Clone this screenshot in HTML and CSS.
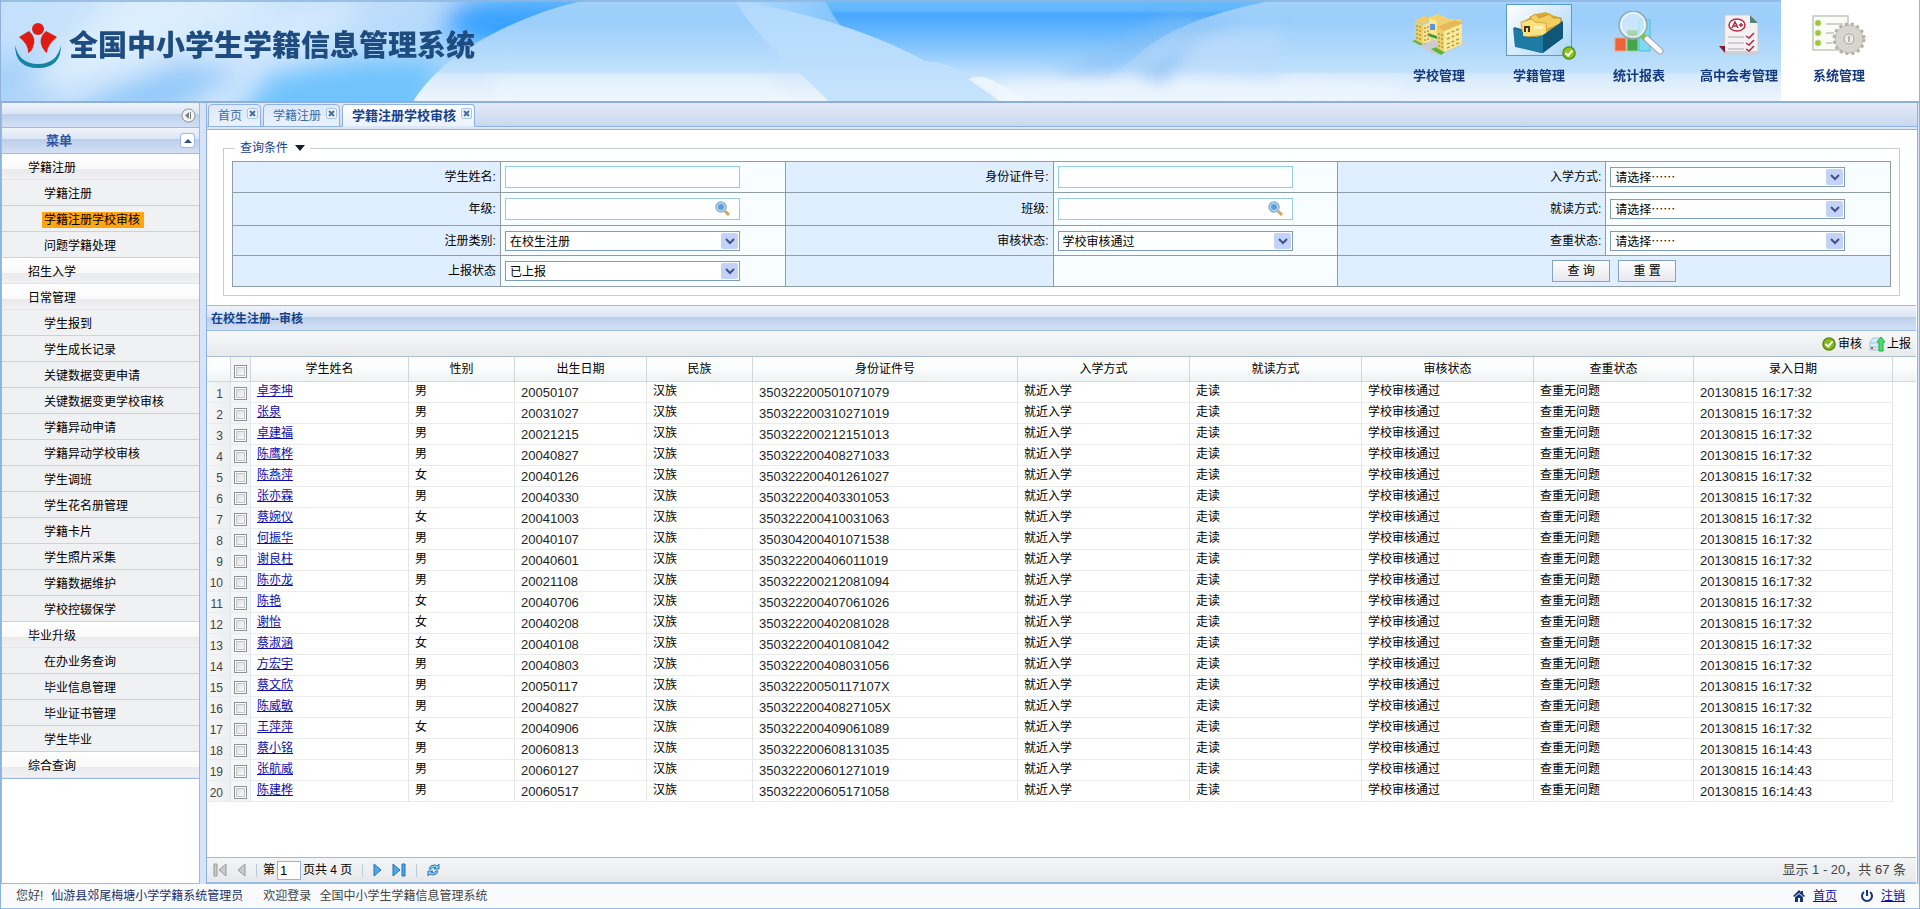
FILE: index.html
```html
<!DOCTYPE html>
<html lang="zh-CN">
<head>
    <meta charset="utf-8">
    <title>全国中小学生学籍信息管理系统</title>
    <link rel="stylesheet" href="styles.css">
</head>
<body>
    <header class="banner">
        <svg class="banner-bg" viewBox="0 0 1920 101" preserveAspectRatio="none" aria-hidden="true">
            <defs>
                <linearGradient id="sky" x1="0" y1="0" x2="0" y2="1">
                    <stop offset="0" stop-color="#a2d2fc"/><stop offset=".2" stop-color="#9bcefb"/>
                    <stop offset=".71" stop-color="#c0e1fc"/><stop offset=".74" stop-color="#d6eafb"/><stop offset="1" stop-color="#eef5fc"/>
                </linearGradient>
                <linearGradient id="left" x1="0" y1="0" x2="1" y2="0">
                    <stop offset="0" stop-color="#c4e0fb"/><stop offset=".35" stop-color="#cfe6fc"/>
                    <stop offset=".7" stop-color="#b4dafc"/><stop offset="1" stop-color="#6dbcfd"/>
                </linearGradient>
                <linearGradient id="deep" gradientUnits="userSpaceOnUse" x1="0" y1="0" x2="0" y2="101">
                    <stop offset="0" stop-color="#6cbcfb"/><stop offset=".1" stop-color="#62b6fb"/><stop offset=".14" stop-color="#48a7fe"/>
                    <stop offset=".35" stop-color="#6bbafd"/><stop offset=".6" stop-color="#a2d2fc"/><stop offset=".8" stop-color="#d3e8fc"/><stop offset="1" stop-color="#eaf4fd"/>
                </linearGradient>
                <linearGradient id="ray" gradientUnits="userSpaceOnUse" x1="0" y1="0" x2="0" y2="101">
                    <stop offset="0" stop-color="#b2d9fc"/><stop offset=".5" stop-color="#b9ddfc"/><stop offset="1" stop-color="#c8e4fc"/>
                </linearGradient>
                <linearGradient id="wedge" x1="0" y1="0" x2="1" y2="0">
                    <stop offset="0" stop-color="#b2d9fc"/><stop offset="1" stop-color="#7dc2fc"/>
                </linearGradient>
                <linearGradient id="veil" x1="0" y1="0" x2="1" y2="0">
                    <stop offset="0" stop-color="#a5d2fb" stop-opacity="0"/><stop offset=".45" stop-color="#a5d2fb" stop-opacity=".8"/><stop offset="1" stop-color="#a5d2fb"/>
                </linearGradient>
                <filter id="soft" x="-50%" y="-50%" width="200%" height="200%"><feGaussianBlur stdDeviation="12"/></filter>
                <filter id="softer" x="-50%" y="-50%" width="200%" height="200%"><feGaussianBlur stdDeviation="7"/></filter>
            </defs>
            <rect width="1920" height="101" fill="url(#sky)"/>
            <path d="M0 0H600L420 101H0z" fill="url(#left)"/>
            <g filter="url(#soft)">
                <path d="M230 130L270 75L360 60L440 60L420 130z" fill="#6fc3fd"/>
                <path d="M60 120L110 90L190 60L240 70L160 120z" fill="#7dbff9" opacity=".7"/>
                <path d="M-20 60L60 50L50 110L-20 110z" fill="#a8d2fa"/>
                <path d="M120 -10H280L120 70L20 90z" fill="#dceefd"/>
                <path d="M200 20L400 -10L300 50L190 65z" fill="#d3e9fd"/>
                <path d="M460 2H600L500 50L440 30z" fill="#36a0fe"/>
                <path d="M330 -5H480L430 10L380 14z" fill="#bfdcf8"/>
            </g>
            <path d="M413 101C432 68 490 22 585 0H1280V101z" fill="url(#sky)"/>
            <path d="M820 0H1275C1215 12 1180 25 1150 45L1080 101H900z" fill="url(#deep)"/>
            <path d="M735 0H825Q838 28 856 40L800 24z" fill="url(#wedge)"/>
            <path d="M735 0C760 45 800 70 828 101H1005Q960 62 925 61Q850 20 735 0z" fill="url(#ray)"/>
            <g filter="url(#softer)">
                <path d="M490 78H770L796 110H500z" fill="#edf6fe" opacity=".6"/>
                <path d="M1050 75L1170 15L1240 20L1110 80z" fill="#86c0f6" opacity=".5"/>
                <path d="M1080 101L1170 40L1280 30V101z" fill="#bcdcfb" opacity=".7"/>
                <path d="M1000 85L1150 76L1400 85V110H1000z" fill="#eaf4fd"/>
                <path d="M1130 75L1200 35L1165 85z" fill="#98c7f5" opacity=".8"/>
            </g>
            <path d="M968 79Q980 74 992 80L1030 101H1000z" fill="#f3f8fe" opacity=".8"/>
            <rect width="1920" height="2" fill="#8fb6df" opacity=".8"/>
        </svg>
        <div class="brand">
            <svg class="logo" viewBox="0 0 46 46" aria-hidden="true">
                <circle cx="23" cy="6" r="6" fill="#df1c14"/>
                <path d="M4 14L14 8Q22 15 18 24Q17 28 13 30Q14 22 4 14z" fill="#df1c14"/>
                <path d="M42 14L31 8Q23 15 27 24Q29 28 32 30Q32 22 42 14z" fill="#df1c14"/>
                <path d="M0 22Q4 41 23 41Q42 41 46 22Q46 45 23 45Q0 45 0 22z" fill="#1484a5"/>
            </svg>
            <h1>全国中小学生学籍信息管理系统</h1>
        </div>
        <nav class="topnav">
            <a href="#">
                <span class="nav-icon">
                    <svg width="56" height="42" viewBox="0 0 56 42">
                        <path d="M0 28L12 24L44 24L56 30L30 42L22 41z" fill="#c9cdd3"/>
                        <path d="M1 28L8 26L16 30L9 32zM20 36L26 34L34 39L30 42z" fill="#58b63a"/>
                        <path d="M4 8L12 12V31L4 27z" fill="#efcf68"/><path d="M12 12L20 9V28L12 31z" fill="#f8e494"/>
                        <path d="M4 7L14 3L22 7L12 11z" fill="#f2cb62"/>
                        <path d="M18 4L27 1L38 6L50 6L50 20L30 24L18 20z" fill="#f0d273"/>
                        <path d="M18 5L26 8V28L18 24z" fill="#f9e88f"/>
                        <path d="M26 15L33 18V39L26 35z" fill="#efcf68"/><path d="M33 18L51 11V31L33 39z" fill="#faea9c"/>
                        <path d="M26 14L44 7L52 10L33 18z" fill="#e8b856"/>
                        <path d="M19 11h5v6h-5z" fill="#5f93db"/><path d="M17 20l9 3v3l-9-3z" fill="#3a9c3e"/>
                        <g stroke="#b59a45" stroke-width="1.500" stroke-dasharray="2 2">
                            <path d="M6 12v16M9 13v16M14 14v15M17 13v14M28 20v15M31 21v16"/>
                            <path d="M36 21l14-6M36 26l14-6M36 31l14-6M36 35l14-6" stroke-dasharray="3 2"/>
                        </g>
                    </svg>
                </span>
                学校管理
            </a>
            <a href="#">
                <span class="nav-icon selected">
                    <svg width="54" height="42" viewBox="0 0 54 42">
                        <path d="M2 15L24 21L50 8L51 26L29 41L3 34z" fill="#17668d"/>
                        <path d="M10 10L24 2L34 0L40 3L50 6L49 18L29 26L10 22z" fill="#dca93a"/>
                        <path d="M18 5L24 2L27 6L38 2L41 6L49 6L48 12L24 22z" fill="#f3cf62" stroke="#c9962e"/>
                        <path d="M9 10L20 7L23 10L34 11L35 23L11 25z" fill="#fae17f" stroke="#d4a540"/>
                        <path d="M12 14h6v6h-2v-4h-2v4h-2z" fill="#4a3313"/><path d="M22 14h9v3h-9z" fill="#fff1b3"/>
                        <path d="M1 16L11 20V24L22 26L31 23L31 41L3 35z" fill="#1e7ca4"/>
                        <path d="M31 23L51 9L51 26L31 41z" fill="#0f5677"/>
                    </svg>
                    <svg class="tick-badge" width="14" height="14" viewBox="0 0 16 16"><circle cx="8" cy="8" r="7" fill="#8fc31b" stroke="#4c8c10" stroke-width="1.5"/><path d="M4 8l3 3l5-6" fill="none" stroke="#fff" stroke-width="2.2"/></svg>
                </span>
                学籍管理
            </a>
            <a href="#">
                <span class="nav-icon">
                    <svg width="52" height="44" viewBox="0 0 52 44">
                        <path d="M2 27h11v13H2z" fill="#f0623a" stroke="#f7a07d"/><path d="M14 19h11v21H14z" fill="#44a648" stroke="#9ad697"/><path d="M26 9h11v31H26z" fill="#7fdaf0" stroke="#46c0dc"/>
                        <circle cx="20" cy="14" r="14" fill="#e9f5fc" fill-opacity=".6" stroke="#93a9b8" stroke-width="1.500"/>
                        <circle cx="20" cy="14" r="12" fill="none" stroke="#fff"/>
                        <path d="M29 24l5 5" stroke="#86c440" stroke-width="6"/><path d="M34 28l13 12" stroke="#9aa5ad" stroke-width="7" stroke-linecap="round"/><path d="M34 28l13 12" stroke="#fafafa" stroke-width="5" stroke-linecap="round"/>
                    </svg>
                </span>
                统计报表
            </a>
            <a href="#">
                <span class="nav-icon">
                    <svg width="40" height="42" viewBox="0 0 40 42">
                        <path d="M6 2H32L39 10V41H5z" fill="#f3f1f3" stroke="#c9c9ce"/><path d="M31 2L39 10H31z" fill="#55837c"/>
                        <path d="M0 33H6V40z" fill="#8d1824"/><path d="M6 38h33v3H6z" fill="#d2cfd3"/>
                        <ellipse cx="18" cy="12" rx="8" ry="6" fill="#fff" stroke="#b8293b" stroke-width="1.500"/>
                        <path d="M13 15l3-6l3 6M14 13h4M20 12h4M22 10v4" fill="none" stroke="#b8293b" stroke-width="1.500"/>
                        <g stroke="#cfcdd3" stroke-width="2"><path d="M9 24h16M9 30h16M9 36h16"/></g>
                        <g fill="none" stroke="#b02a3c" stroke-width="1.500"><path d="M27 23l3 2l5-5M27 30l3 2l5-5M27 36l3 2l5-5"/></g>
                    </svg>
                </span>
                高中会考管理
            </a>
            <a href="#">
                <span class="nav-icon">
                    <svg width="54" height="40" viewBox="0 0 54 40">
                        <path d="M1 1H36V35H1z" fill="#fbfbf8" stroke="#c4c6be" stroke-width="1.500"/>
                        <g fill="#9cc63b" stroke="#c3dd88"><circle cx="6" cy="8" r="3"/><circle cx="6" cy="18" r="3"/><circle cx="6" cy="28" r="3"/></g>
                        <path d="M14 9h17M14 18h8M14 28h6" stroke="#d0d2cc" stroke-width="2"/>
                        <circle cx="37" cy="24" r="15" fill="none" stroke="#b7b2a9" stroke-width="3" stroke-dasharray="3 3"/>
                        <circle cx="37" cy="24" r="9" fill="none" stroke="#d8d5cf" stroke-width="9"/>
                        <circle cx="37" cy="24" r="14" fill="none" stroke="#b5b0a7"/>
                        <circle cx="37" cy="24" r="5" fill="#efedea" stroke="#a5a198"/><path d="M37 21v6" stroke="#a5a198" stroke-width="1.500"/>
                    </svg>
                </span>
                系统管理
            </a>
        </nav>
    </header>

    <div class="workspace">
        <aside class="sidebar">
            <div class="side-bar-top">
                <button class="collapse" aria-label="收起"><svg width="15" height="15" viewBox="0 0 15 15"><circle cx="7.500" cy="7.500" r="6.500" fill="#f4f3f0" stroke="#8f9297"/><path d="M8 4v7L4 7.500zM9 4h1v7H9z" fill="#7d7f86"/></svg></button>
            </div>
            <div class="side-title">
                <h2>菜单</h2>
                <button class="fold" aria-label="折叠"><svg width="8" height="4" viewBox="0 0 8 4"><path d="M4 0L8 4H0z" fill="#2c4f8c"/></svg></button>
            </div>
            <ul class="menu">
                <li class="group"><a href="#">学籍注册</a></li>
                <li><a href="#">学籍注册</a></li>
                <li><a href="#" class="current">学籍注册学校审核</a></li>
                <li><a href="#">问题学籍处理</a></li>
                <li class="group"><a href="#">招生入学</a></li>
                <li class="group"><a href="#">日常管理</a></li>
                <li><a href="#">学生报到</a></li>
                <li><a href="#">学生成长记录</a></li>
                <li><a href="#">关键数据变更申请</a></li>
                <li><a href="#">关键数据变更学校审核</a></li>
                <li><a href="#">学籍异动申请</a></li>
                <li><a href="#">学籍异动学校审核</a></li>
                <li><a href="#">学生调班</a></li>
                <li><a href="#">学生花名册管理</a></li>
                <li><a href="#">学籍卡片</a></li>
                <li><a href="#">学生照片采集</a></li>
                <li><a href="#">学籍数据维护</a></li>
                <li><a href="#">学校控辍保学</a></li>
                <li class="group"><a href="#">毕业升级</a></li>
                <li><a href="#">在办业务查询</a></li>
                <li><a href="#">毕业信息管理</a></li>
                <li><a href="#">毕业证书管理</a></li>
                <li><a href="#">学生毕业</a></li>
                <li class="group"><a href="#">综合查询</a></li>
            </ul>
        </aside>

        <main class="content">
            <div class="tabs">
                <div class="tab"><a href="#">首页</a><button class="close" aria-label="关闭首页"><svg width="7" height="7" viewBox="0 0 7 7"><path d="M1 1l5 5M6 1l-5 5"/></svg></button></div>
                <div class="tab"><a href="#">学籍注册</a><button class="close" aria-label="关闭学籍注册"><svg width="7" height="7" viewBox="0 0 7 7"><path d="M1 1l5 5M6 1l-5 5"/></svg></button></div>
                <div class="tab active"><a href="#">学籍注册学校审核</a><button class="close" aria-label="关闭学籍注册学校审核"><svg width="7" height="7" viewBox="0 0 7 7"><path d="M1 1l5 5M6 1l-5 5"/></svg></button></div>
            </div>

            <form class="query">
                <fieldset>
                    <legend>查询条件 <svg width="10" height="6" viewBox="0 0 10 6"><path d="M0 0h10L5 6z" fill="#111d2c"/></svg></legend>
                    <table class="query-table">
                        <colgroup><col class="c-label"><col class="c-field"><col class="c-label"><col class="c-field"><col class="c-label"><col class="c-field"></colgroup>
                        <tr class="r1">
                            <th><label for="name">学生姓名:</label></th><td><input type="text" id="name"></td>
                            <th><label for="idno">身份证件号:</label></th><td><input type="text" id="idno"></td>
                            <th><label for="enter">入学方式:</label></th><td><select id="enter"><option>请选择……</option></select></td>
                        </tr>
                        <tr class="r2">
                            <th><label for="grade">年级:</label></th><td><input type="text" id="grade" class="lookup"></td>
                            <th><label for="klass">班级:</label></th><td><input type="text" id="klass" class="lookup"></td>
                            <th><label for="study">就读方式:</label></th><td><select id="study"><option>请选择……</option></select></td>
                        </tr>
                        <tr class="r3">
                            <th><label for="regtype">注册类别:</label></th><td><select id="regtype"><option>在校生注册</option></select></td>
                            <th><label for="audit">审核状态:</label></th><td><select id="audit"><option>学校审核通过</option></select></td>
                            <th><label for="dup">查重状态:</label></th><td><select id="dup"><option>请选择……</option></select></td>
                        </tr>
                        <tr class="r4">
                            <th><label for="report">上报状态</label></th><td><select id="report"><option>已上报</option></select></td>
                            <th></th><td></td>
                            <th colspan="2" class="actions"><div class="buttons"><button type="button">查 询</button><button type="button">重 置</button></div></th>
                        </tr>
                    </table>
                </fieldset>
            </form>

            <section class="grid-panel">
                <h2 class="grid-title">在校生注册--审核</h2>
                <div class="grid-tools">
                    <button><svg width="14" height="14" viewBox="0 0 16 16"><circle cx="8" cy="8" r="7" fill="#86b81c" stroke="#4f850f" stroke-width="1.5"/><path d="M4 8l3 3l5-6" fill="none" stroke="#fff" stroke-width="2.200"/></svg>审核</button>
                    <button><svg width="16" height="16" viewBox="0 0 16 16"><path d="M1 6L4 2H12V14H1z" fill="#d8edf8" stroke="#9cc6e0"/><path d="M1 7h8M1 11h8" stroke="#9cc6e0"/><path d="M2 11h2v2H2z" fill="#d94a3d"/><path d="M12 1L16 6H14V15H10V6H8z" fill="#4be068" stroke="#23a843"/></svg>上报</button>
                </div>
                <div class="grid-scroll">
                <table class="grid">
                    <colgroup><col class="w-no"><col class="w-check"><col class="w-name"><col class="w-sex"><col class="w-birth"><col class="w-sex"><col class="w-id"><col class="w-mode"><col class="w-mode"><col class="w-mode"><col class="w-dup"><col class="w-time"><col></colgroup>
                    <thead>
                        <tr><th></th><th class="check"><input type="checkbox" aria-label="全选"></th><th>学生姓名</th><th>性别</th><th>出生日期</th><th>民族</th><th>身份证件号</th><th>入学方式</th><th>就读方式</th><th>审核状态</th><th>查重状态</th><th>录入日期</th><th class="rest"></th></tr>
                    </thead>
                    <tbody>
                        <tr><td class="no">1</td><td class="check"><input type="checkbox" aria-label="选择 1"></td><td><a href="#">卓李坤</a></td><td>男</td><td class="num">20050107</td><td>汉族</td><td class="num">350322200501071079</td><td>就近入学</td><td>走读</td><td>学校审核通过</td><td>查重无问题</td><td class="num">20130815 16:17:32</td><td class="rest"></td></tr>
                        <tr><td class="no">2</td><td class="check"><input type="checkbox" aria-label="选择 2"></td><td><a href="#">张泉</a></td><td>男</td><td class="num">20031027</td><td>汉族</td><td class="num">350322200310271019</td><td>就近入学</td><td>走读</td><td>学校审核通过</td><td>查重无问题</td><td class="num">20130815 16:17:32</td><td class="rest"></td></tr>
                        <tr><td class="no">3</td><td class="check"><input type="checkbox" aria-label="选择 3"></td><td><a href="#">卓建福</a></td><td>男</td><td class="num">20021215</td><td>汉族</td><td class="num">350322200212151013</td><td>就近入学</td><td>走读</td><td>学校审核通过</td><td>查重无问题</td><td class="num">20130815 16:17:32</td><td class="rest"></td></tr>
                        <tr><td class="no">4</td><td class="check"><input type="checkbox" aria-label="选择 4"></td><td><a href="#">陈鹰桦</a></td><td>男</td><td class="num">20040827</td><td>汉族</td><td class="num">350322200408271033</td><td>就近入学</td><td>走读</td><td>学校审核通过</td><td>查重无问题</td><td class="num">20130815 16:17:32</td><td class="rest"></td></tr>
                        <tr><td class="no">5</td><td class="check"><input type="checkbox" aria-label="选择 5"></td><td><a href="#">陈燕萍</a></td><td>女</td><td class="num">20040126</td><td>汉族</td><td class="num">350322200401261027</td><td>就近入学</td><td>走读</td><td>学校审核通过</td><td>查重无问题</td><td class="num">20130815 16:17:32</td><td class="rest"></td></tr>
                        <tr><td class="no">6</td><td class="check"><input type="checkbox" aria-label="选择 6"></td><td><a href="#">张亦霖</a></td><td>男</td><td class="num">20040330</td><td>汉族</td><td class="num">350322200403301053</td><td>就近入学</td><td>走读</td><td>学校审核通过</td><td>查重无问题</td><td class="num">20130815 16:17:32</td><td class="rest"></td></tr>
                        <tr><td class="no">7</td><td class="check"><input type="checkbox" aria-label="选择 7"></td><td><a href="#">蔡婉仪</a></td><td>女</td><td class="num">20041003</td><td>汉族</td><td class="num">350322200410031063</td><td>就近入学</td><td>走读</td><td>学校审核通过</td><td>查重无问题</td><td class="num">20130815 16:17:32</td><td class="rest"></td></tr>
                        <tr><td class="no">8</td><td class="check"><input type="checkbox" aria-label="选择 8"></td><td><a href="#">何振华</a></td><td>男</td><td class="num">20040107</td><td>汉族</td><td class="num">350304200401071538</td><td>就近入学</td><td>走读</td><td>学校审核通过</td><td>查重无问题</td><td class="num">20130815 16:17:32</td><td class="rest"></td></tr>
                        <tr><td class="no">9</td><td class="check"><input type="checkbox" aria-label="选择 9"></td><td><a href="#">谢良柱</a></td><td>男</td><td class="num">20040601</td><td>汉族</td><td class="num">350322200406011019</td><td>就近入学</td><td>走读</td><td>学校审核通过</td><td>查重无问题</td><td class="num">20130815 16:17:32</td><td class="rest"></td></tr>
                        <tr><td class="no">10</td><td class="check"><input type="checkbox" aria-label="选择 10"></td><td><a href="#">陈亦龙</a></td><td>男</td><td class="num">20021108</td><td>汉族</td><td class="num">350322200212081094</td><td>就近入学</td><td>走读</td><td>学校审核通过</td><td>查重无问题</td><td class="num">20130815 16:17:32</td><td class="rest"></td></tr>
                        <tr><td class="no">11</td><td class="check"><input type="checkbox" aria-label="选择 11"></td><td><a href="#">陈艳</a></td><td>女</td><td class="num">20040706</td><td>汉族</td><td class="num">350322200407061026</td><td>就近入学</td><td>走读</td><td>学校审核通过</td><td>查重无问题</td><td class="num">20130815 16:17:32</td><td class="rest"></td></tr>
                        <tr><td class="no">12</td><td class="check"><input type="checkbox" aria-label="选择 12"></td><td><a href="#">谢怡</a></td><td>女</td><td class="num">20040208</td><td>汉族</td><td class="num">350322200402081028</td><td>就近入学</td><td>走读</td><td>学校审核通过</td><td>查重无问题</td><td class="num">20130815 16:17:32</td><td class="rest"></td></tr>
                        <tr><td class="no">13</td><td class="check"><input type="checkbox" aria-label="选择 13"></td><td><a href="#">蔡淑涵</a></td><td>女</td><td class="num">20040108</td><td>汉族</td><td class="num">350322200401081042</td><td>就近入学</td><td>走读</td><td>学校审核通过</td><td>查重无问题</td><td class="num">20130815 16:17:32</td><td class="rest"></td></tr>
                        <tr><td class="no">14</td><td class="check"><input type="checkbox" aria-label="选择 14"></td><td><a href="#">方宏宇</a></td><td>男</td><td class="num">20040803</td><td>汉族</td><td class="num">350322200408031056</td><td>就近入学</td><td>走读</td><td>学校审核通过</td><td>查重无问题</td><td class="num">20130815 16:17:32</td><td class="rest"></td></tr>
                        <tr><td class="no">15</td><td class="check"><input type="checkbox" aria-label="选择 15"></td><td><a href="#">蔡文欣</a></td><td>男</td><td class="num">20050117</td><td>汉族</td><td class="num">35032220050117107X</td><td>就近入学</td><td>走读</td><td>学校审核通过</td><td>查重无问题</td><td class="num">20130815 16:17:32</td><td class="rest"></td></tr>
                        <tr><td class="no">16</td><td class="check"><input type="checkbox" aria-label="选择 16"></td><td><a href="#">陈威敏</a></td><td>男</td><td class="num">20040827</td><td>汉族</td><td class="num">35032220040827105X</td><td>就近入学</td><td>走读</td><td>学校审核通过</td><td>查重无问题</td><td class="num">20130815 16:17:32</td><td class="rest"></td></tr>
                        <tr><td class="no">17</td><td class="check"><input type="checkbox" aria-label="选择 17"></td><td><a href="#">王萍萍</a></td><td>女</td><td class="num">20040906</td><td>汉族</td><td class="num">350322200409061089</td><td>就近入学</td><td>走读</td><td>学校审核通过</td><td>查重无问题</td><td class="num">20130815 16:17:32</td><td class="rest"></td></tr>
                        <tr><td class="no">18</td><td class="check"><input type="checkbox" aria-label="选择 18"></td><td><a href="#">蔡小铭</a></td><td>男</td><td class="num">20060813</td><td>汉族</td><td class="num">350322200608131035</td><td>就近入学</td><td>走读</td><td>学校审核通过</td><td>查重无问题</td><td class="num">20130815 16:14:43</td><td class="rest"></td></tr>
                        <tr><td class="no">19</td><td class="check"><input type="checkbox" aria-label="选择 19"></td><td><a href="#">张航威</a></td><td>男</td><td class="num">20060127</td><td>汉族</td><td class="num">350322200601271019</td><td>就近入学</td><td>走读</td><td>学校审核通过</td><td>查重无问题</td><td class="num">20130815 16:14:43</td><td class="rest"></td></tr>
                        <tr><td class="no">20</td><td class="check"><input type="checkbox" aria-label="选择 20"></td><td><a href="#">陈建桦</a></td><td>男</td><td class="num">20060517</td><td>汉族</td><td class="num">350322200605171058</td><td>就近入学</td><td>走读</td><td>学校审核通过</td><td>查重无问题</td><td class="num">20130815 16:14:43</td><td class="rest"></td></tr>
                    </tbody>
                </table>
                </div>
                <div class="pager">
                    <button aria-label="第一页"><svg width="14" height="14" viewBox="0 0 14 14"><path d="M1 1h3v12H1zM13 1v12L6 7z" fill="#c9c9c9" stroke="#9b9b9b"/></svg></button>
                    <button aria-label="上一页"><svg width="9" height="14" viewBox="0 0 9 14"><path d="M8 1v12L1 7z" fill="#c9c9c9" stroke="#9b9b9b"/></svg></button>
                    <span class="sep"></span>
                    <label for="page">第</label><input type="text" id="page" value="1"><span class="total">页共 4 页</span>
                    <span class="sep"></span>
                    <button aria-label="下一页"><svg width="9" height="14" viewBox="0 0 9 14"><path d="M1 1v12L8 7z" fill="#4fa6e4" stroke="#2274b8"/></svg></button>
                    <button aria-label="最后一页"><svg width="14" height="14" viewBox="0 0 14 14"><path d="M10 1h3v12h-3zM1 1v12L8 7z" fill="#4fa6e4" stroke="#2274b8"/></svg></button>
                    <span class="sep"></span>
                    <button aria-label="刷新"><svg width="13" height="14" viewBox="0 0 13 14"><path d="M2 6Q3 2 7 2Q9 2 10 3L12 1V6H7L9 5Q6 3 4 6zM11 8Q10 12 6 12Q4 12 3 11L1 13V8H6L4 9Q7 11 9 8z" fill="#8fd0f4" stroke="#2b7ab8"/></svg></button>
                    <span class="range">显示 1 - 20，共 67 条</span>
                </div>
            </section>
        </main>
    </div>

    <footer class="status">
        <span>您好!</span>
        <span class="user">仙游县郊尾梅塘小学学籍系统管理员</span>
        <span class="welcome">欢迎登录</span>
        <span>全国中小学生学籍信息管理系统</span>
        <div class="links">
            <svg width="12" height="12" viewBox="0 0 12 12"><path d="M6 0L8 2V1H10V4L12 6L11 7L6 3L1 7L0 6zM2 7L6 4L10 7V12H7V8H5V12H2z" fill="#16357f"/></svg>
            <a href="#">首页</a>
            <svg class="power" width="12" height="12" viewBox="0 0 12 12"><path d="M3 2A5 5 0 1 0 9 2M6 0V6" fill="none" stroke="#16357f" stroke-width="2"/></svg>
            <a href="#">注销</a>
        </div>
    </footer>
</body>
</html>
```

FILE: styles.css
```css
* {
    box-sizing: border-box;
}

body {
    margin: 0;
    height: 100vh;
    display: flex;
    flex-direction: column;
    font-family: "Liberation Sans", "Noto Sans CJK SC", sans-serif;
    font-size: 12px;
    line-height: 16px;
    color: #000;
    background: #dfe8f6;
    border-left: 1px solid #8fb2dc;
    border-right: 1px solid #8fb2dc;
}

button, input, select {
    font: inherit;
    color: inherit;
}

button {
    padding: 0;
    border: 0;
    background: none;
    cursor: pointer;
}

svg {
    display: block;
    flex: none;
}

/* top banner */
.banner {
    position: relative;
    flex: none;
    height: 103px;
    display: flex;
    justify-content: space-between;
    border-bottom: 2px solid #8fafd8;
}

.banner-bg {
    position: absolute;
    width: 100%;
    height: 100%;
}

.brand {
    position: relative;
    display: flex;
    align-items: center;
    gap: 8px;
    padding: 0 0 9px 14px;
}

.logo {
    width: 46px;
    height: 46px;
}

.brand h1 {
    margin: 0;
    font-size: 29px;
    line-height: 32px;
    font-weight: 900;
    color: #1f4c80;
    white-space: nowrap;
}

.topnav {
    position: relative;
    display: flex;
    padding-right: 30px;
    background: linear-gradient(#fff, #fff) right / 138px 100% no-repeat;
}

.topnav a {
    width: 100px;
    padding-top: 4px;
    display: flex;
    flex-direction: column;
    align-items: center;
    gap: 12px;
    font-size: 13px;
    font-weight: bold;
    line-height: 16px;
    color: #15397f;
    text-decoration: none;
    white-space: nowrap;
}

.nav-icon {
    position: relative;
    width: 66px;
    height: 52px;
    padding-bottom: 1px;
    display: flex;
    justify-content: center;
    align-items: flex-end;
}

.nav-icon.selected {
    border: 1px solid #5b9cc6;
    background: linear-gradient(135deg, #fff, #a9d5f9);
}

.tick-badge {
    position: absolute;
    right: -5px;
    bottom: -5px;
}

/* work area */
.workspace {
    flex: 1;
    min-height: 0;
    display: flex;
    gap: 6px;
    background: #d6e3f8;
}

.sidebar {
    width: 199px;
    flex: none;
    background: #fff;
    border: 1px solid #99bbe8;
    border-top: 0;
}

.side-bar-top, .side-title, .grid-title {
    background: linear-gradient(#f0f4fb, #dbe5f5 45%, #bccfeb 46%, #d3e0f5);
}

.side-bar-top {
    height: 25px;
    display: flex;
    align-items: center;
    justify-content: flex-end;
    padding-right: 3px;
    border-bottom: 1px solid #99bbe8;
}

.side-title {
    height: 26px;
    display: flex;
    align-items: center;
    justify-content: space-between;
    padding: 0 4px 0 44px;
    border-bottom: 1px solid #99bbe8;
}

.side-title h2 {
    margin: 0;
    font-size: 13px;
    line-height: 16px;
    color: #2f55a0;
}

.fold {
    width: 15px;
    height: 15px;
    display: flex;
    align-items: center;
    justify-content: center;
    background: #fff;
    border: 1px solid #99bbe8;
    border-radius: 3px;
}

.menu {
    list-style: none;
    margin: 0;
    padding: 0;
    border-bottom: 1px solid #99bbe8;
}

.menu li {
    height: 26px;
    padding: 6px 0 0 40px;
    background: #f0f1f3;
    border-bottom: 1px solid #cfd1d4;
}

.menu .group {
    padding-left: 24px;
    background: linear-gradient(#fff, #fafafa 58%, #e9eaec 60%, #f1f1f3);
    border-color: #e4e5e8;
}

.menu a {
    display: inline-block;
    padding: 0 3px 0 2px;
    color: #000;
    text-decoration: none;
}

.menu .current {
    padding-right: 4px;
    background: #fea50f;
}

.content {
    flex: 1;
    min-width: 0;
    display: flex;
    flex-direction: column;
    background: #fff;
    border: 1px solid #8db2e3;
    border-top: 0;
    border-bottom: 0;
    margin-right: 1px;
}

.tabs {
    flex: none;
    height: 27px;
    display: flex;
    align-items: flex-end;
    gap: 2px;
    padding: 0 1px 3px;
    background: linear-gradient(#e3eaf7, #c9d8ef 23px, #8db2e3 23px, #8db2e3 24px, #dce8f8 24px, #dce8f8 26px, #8db2e3 26px);
}

.tab {
    height: 23px;
    display: flex;
    gap: 5px;
    padding: 3px 2px 0 9px;
    background: linear-gradient(#dde9f8, #e9f2fc);
    border: 1px solid #8db2e3;
    border-radius: 4px 4px 0 0;
}

.tab a {
    color: #416aa3;
    text-decoration: none;
}

.tab.active {
    background: linear-gradient(#fff, #eaf2fc);
    border-bottom-color: #dce8f8;
}

.tab.active a {
    font-size: 13px;
    font-weight: bold;
    color: #15428b;
}

.close {
    width: 11px;
    height: 11px;
    display: flex;
    align-items: center;
    justify-content: center;
    border: 1px solid #a9c4e8;
    border-radius: 2px;
    background: #eef5fc;
}

.close path {
    stroke: #4a6b9c;
    stroke-width: 2;
}

/* query form */
.query {
    flex: none;
    padding: 10px 17px 9px 16px;
}

fieldset {
    margin: 0;
    padding: 5px 8px 8px;
    border: 1px solid #c8cdd0;
}

legend {
    display: flex;
    align-items: center;
    gap: 7px;
    margin-left: 3px;
    padding: 0 5px;
    color: #15428b;
}

.query-table {
    width: 100%;
    table-layout: fixed;
    border-collapse: collapse;
}

.c-label {
    width: 16%;
}

.c-field {
    width: 17%;
}

.query-table th, .query-table td {
    padding: 0 4px;
    border: 1px solid #8f9da6;
    background: #f8fdff;
    font-weight: normal;
}

.query-table th {
    text-align: right;
    background: #e0efff;
}

.query-table input, .query-table select {
    display: block;
    width: 235px;
    max-width: 100%;
}

.query-table input {
    height: 22px;
    padding: 0 4px;
    border: 1px solid #98cbe0;
    background: linear-gradient(#f1f9fc, #fff 5px);
}

.query-table .lookup {
    background: url("data:image/svg+xml,%3Csvg xmlns='http://www.w3.org/2000/svg' width='16' height='16'%3E%3Cpath d='M10 10l4 4' stroke='%23d8a257' stroke-width='3'/%3E%3Ccircle cx='6' cy='6' r='5' fill='%23b6daf4' stroke='%238fb0cc' stroke-width='1.5'/%3E%3Ccircle cx='6' cy='6' r='3' fill='%235c9fd6'/%3E%3C/svg%3E") right 8px center no-repeat #fff;
}

.query-table select {
    height: 20px;
    padding: 0 20px 0 4px;
    font-family: "Noto Sans CJK SC", sans-serif;
    border: 1px solid #7f9db9;
    border-radius: 0;
    appearance: none;
    background: url("data:image/svg+xml,%3Csvg xmlns='http://www.w3.org/2000/svg' width='17' height='16'%3E%3Crect width='17' height='16' rx='2' fill='%23c3d2f8'/%3E%3Cpath d='M5 6l4 4l4-4' fill='none' stroke='%233f5585' stroke-width='2'/%3E%3C/svg%3E") right 1px center no-repeat #fff;
}

.r1 { height: 31px; }
.r2 { height: 33px; }
.r3 { height: 30px; }
.r4 { height: 31px; }

.buttons {
    display: flex;
    justify-content: center;
    gap: 8px;
}

.buttons button {
    width: 58px;
    height: 22px;
    border: 1px solid #84a3c4;
    background: linear-gradient(#fff, #e6e8ee);
}

/* result grid */
.grid-panel {
    flex: 1;
    min-height: 0;
    display: flex;
    flex-direction: column;
    border-top: 1px solid #99bbe8;
    margin-right: 1px;
}

.grid-title {
    flex: none;
    margin: 0;
    padding: 5px 4px 3px;
    font-size: 12px;
    line-height: 16px;
    color: #15428b;
    border-bottom: 1px solid #99bbe8;
}

.grid-tools {
    flex: none;
    height: 26px;
    display: flex;
    align-items: center;
    justify-content: flex-end;
    gap: 7px;
    padding-right: 5px;
    background: linear-gradient(#f8f8f8, #e8eaeb);
    border-bottom: 1px solid #a9bfd3;
}

.grid-tools button {
    display: flex;
    align-items: center;
    gap: 2px;
}

.grid-scroll {
    flex: 1;
    min-height: 0;
    overflow: hidden;
}

.grid {
    width: 100%;
    table-layout: fixed;
    border-collapse: separate;
    border-spacing: 0;
}

.w-no { width: 24px; }
.w-check { width: 20px; }
.w-name { width: 158px; }
.w-sex { width: 106px; }
.w-birth { width: 132px; }
.w-id { width: 265px; }
.w-mode { width: 172px; }
.w-dup { width: 160px; }
.w-time { width: 199px; }

.grid th {
    height: 25px;
    padding: 0;
    font-weight: normal;
    background: linear-gradient(#fff, #fbfcfc 50%, #eef3f4);
    border-right: 1px solid #d2d6d8;
    border-bottom: 1px solid #d5d9dc;
}

.grid td {
    height: 21px;
    padding: 1px 6px 3px;
    white-space: nowrap;
    border-right: 1px solid #e3e5e6;
    border-bottom: 1px solid #e9ebec;
}

.grid .rest {
    border-right: 0;
}

.grid td.rest {
    border-bottom: 0;
}

.grid .num {
    padding: 3px 6px 1px;
    font-size: 13px;
    color: #222;
}

.grid .no {
    padding: 4px 7px 0 0;
    text-align: right;
    color: #444;
    background: linear-gradient(90deg, #f7f7f8, #eceeef);
}

.grid .check {
    padding: 5px 0 0 3px;
    vertical-align: top;
    background: #f4f5f6;
}

.grid a {
    color: #0c0cb0;
}

.grid input {
    display: block;
    width: 13px;
    height: 13px;
    margin: 0;
    appearance: none;
    border: 1px solid #8b9197;
    background: linear-gradient(135deg, #d8dadb, #fdfdfd);
    box-shadow: inset 0 0 0 1px #fff, inset 0 0 0 2px #c2c6c9;
}

.grid th input {
    margin-top: 3px;
}

.pager {
    flex: none;
    height: 27px;
    display: flex;
    align-items: center;
    gap: 10px;
    padding: 0 10px 0 6px;
    background: linear-gradient(#f4f5f6, #e6e8e9);
    border-top: 1px solid #99bbe8;
    border-bottom: 2px solid #99bbe8;
}

.pager .sep {
    width: 1px;
    height: 13px;
    background: #b8cbe0;
}

.pager label {
    margin-left: -4px;
}

.pager input {
    width: 24px;
    height: 19px;
    padding: 0 2px;
    margin: 0 -8px;
    border: 1px solid #99b3d8;
    background: #fff;
    font-size: 13px;
}

.range {
    margin-left: auto;
    font-size: 13px;
    color: #444;
}

/* status line */
.status {
    flex: none;
    height: 25px;
    display: flex;
    align-items: center;
    gap: 8px;
    padding: 0 14px 1px 15px;
    color: #444;
    background: #f9fafc;
    border-bottom: 1px solid #99bbe8;
}

.status .user {
    color: #1c2f6c;
}

.welcome {
    margin-left: 12px;
}

.links {
    margin-left: auto;
    display: flex;
    align-items: center;
    gap: 8px;
}

.links a {
    color: #0c0cb0;
}

.power {
    margin-left: 16px;
}
```
